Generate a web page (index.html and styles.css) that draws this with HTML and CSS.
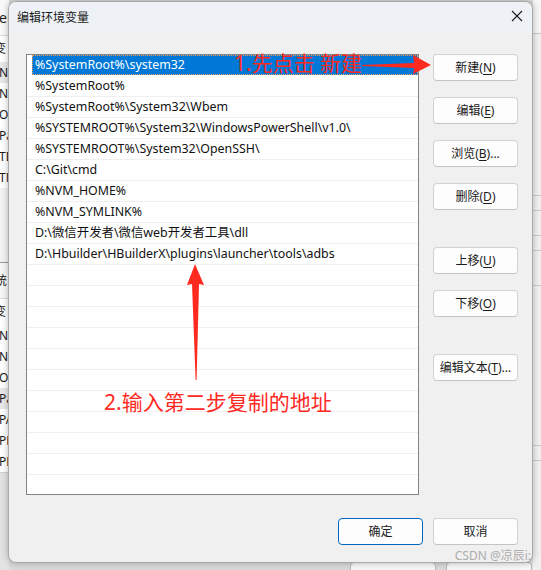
FILE: index.html
```html
<!DOCTYPE html>
<html lang="zh-CN">
<head>
<meta charset="utf-8">
<title>编辑环境变量</title>
<link rel="stylesheet" href="styles.css">
</head>
<body>
<div class="desktop">
  <div class="backwin">
    <div class="bw-left">
      <div class="bw-head"><span>ver</span></div>
      <div class="bw-row bw-tall"><span>变</span></div>
      <div class="bw-row bw-sel"><span>NV</span></div>
      <div class="bw-row"><span>NV</span></div>
      <div class="bw-row"><span>Or</span></div>
      <div class="bw-row"><span>Pa</span></div>
      <div class="bw-row"><span>TE</span></div>
      <div class="bw-row"><span>TM</span></div>
      <div class="bw-gap"></div>
      <div class="bw-head2"><span>统</span></div>
      <div class="bw-row bw-tall"><span>变</span></div>
      <div class="bw-row"><span>NV</span></div>
      <div class="bw-row"><span>NV</span></div>
      <div class="bw-row"><span>OS</span></div>
      <div class="bw-row bw-sel"><span>Pa</span></div>
      <div class="bw-row"><span>PA</span></div>
      <div class="bw-row"><span>PR</span></div>
      <div class="bw-row"><span>PR</span></div>
      <div class="bw-foot"></div>
    </div>
    <div class="bw-mid">
      <div class="bw-mid-fill"></div>
      <div class="bw-btns"><span class="bw-btn"></span><span class="bw-btn"></span></div>
    </div>
    <div class="bw-right">
      <div class="bwr s1"></div>
      <div class="bwr s2"></div>
      <div class="bwr s3"></div>
      <div class="bwr s4"></div>
      <div class="bwr s5"></div>
      <div class="bwr s6"></div>
      <div class="bwr s7"></div>
      <div class="bwr s8"></div>
    </div>
  </div>

  <div class="dialog">
    <div class="titlebar">
      <span class="title">编辑环境变量</span>
      <svg class="close" width="12" height="12" viewBox="0 0 12 12"><path d="M1 1L11 11M11 1L1 11" stroke="#1b1b1b" stroke-width="1.1" fill="none"/></svg>
    </div>
    <div class="body">
      <div class="list">
        <div class="item selected"><span class="label">%SystemRoot%\system32</span></div>
        <div class="item"><span class="label">%SystemRoot%</span></div>
        <div class="item"><span class="label">%SystemRoot%\System32\Wbem</span></div>
        <div class="item"><span class="label">%SYSTEMROOT%\System32\WindowsPowerShell\v1.0\</span></div>
        <div class="item"><span class="label">%SYSTEMROOT%\System32\OpenSSH\</span></div>
        <div class="item"><span class="label">C:\Git\cmd</span></div>
        <div class="item"><span class="label">%NVM_HOME%</span></div>
        <div class="item"><span class="label">%NVM_SYMLINK%</span></div>
        <div class="item"><span class="label">D:\微信开发者\微信web开发者工具\dll</span></div>
        <div class="item"><span class="label">D:\Hbuilder\HBuilderX\plugins\launcher\tools\adbs</span></div>
        <div class="item"></div>
        <div class="item"></div>
        <div class="item"></div>
        <div class="item"></div>
        <div class="item"></div>
        <div class="item"></div>
        <div class="item"></div>
        <div class="item"></div>
        <div class="item"></div>
        <div class="item"></div>
        <div class="item"></div>
      </div>
      <div class="side">
        <button class="btn">新建(<u>N</u>)</button>
        <button class="btn">编辑(<u>E</u>)</button>
        <button class="btn">浏览(<u>B</u>)...</button>
        <button class="btn">删除(<u>D</u>)</button>
        <button class="btn sep">上移(<u>U</u>)</button>
        <button class="btn">下移(<u>O</u>)</button>
        <button class="btn sep">编辑文本(<u>T</u>)...</button>
      </div>
    </div>
    <div class="footer">
      <button class="btn primary">确定</button>
      <button class="btn">取消</button>
    </div>
  </div>

  <svg class="arrows" width="541" height="570" viewBox="0 0 541 570">
    <polygon points="362,65 414,63 413,55 431,65 413,74 414,68 362,66" fill="#ff2a1f"/>
    <polygon points="195,264 204,285 199,284 196.6,380 195.6,380 192,284 187,285" fill="#ff2a1f"/>
  </svg>
  <div class="note note1">1.先点击 新建</div>
  <div class="note note2">2.输入第二步复制的地址</div>
  <div class="watermark">CSDN @凉辰i:</div>
</div>
</body>
</html>
```

FILE: styles.css
```css
* { box-sizing: border-box; }

body {
  margin: 0;
  background: #f0f0f0;
  font-family: "Noto Sans", "Noto Sans CJK SC", sans-serif;
  color: #1a1a1a;
}

.desktop {
  position: relative;
  width: 541px;
  height: 570px;
  overflow: hidden;
  background: #f0f0f0;
}

/* ---------- background window ---------- */
.backwin {
  position: absolute;
  left: 0;
  top: 0;
  width: 541px;
  height: 570px;
  display: flex;
  background: #ececec;
}

.bw-left {
  width: 9px;
  display: flex;
  flex-direction: column;
  overflow: hidden;
  background: #ffffff;
  font-size: 12px;
  white-space: nowrap;
}
.bw-left span { display: block; margin-left: -7px; color: #1a1a1a; }
.bw-head { height: 36px; line-height: 36px; background: #fafafa; border-bottom: 1px solid #dcdcdc; font-size: 14px; }
.bw-head span { margin-left: -8px; }
.bw-row { height: 21px; line-height: 21px; background: #fff; }
.bw-row span { margin-left: -1px; }
.bw-tall { height: 26px; line-height: 26px; }
.bw-tall span { margin-left: -6px; }
.bw-sel { background: #e9e9e9; }
.bw-gap { height: 75px; background: #f3f3f3; border-bottom: 1px solid #9a9a9a; }
.bw-head2 { height: 36px; line-height: 36px; background: #f7f7f7; border-bottom: 1px solid #dcdcdc; }
.bw-head2 span { margin-left: -5px; }
.bw-foot { flex: 1; background: #e3e3e3; border-top: 1px solid #cfcfcf; }

.bw-mid { flex: 1; display: flex; flex-direction: column; background: #dadada; }
.bw-mid-fill { flex: 1; }
.bw-btns { height: 8px; display: flex; justify-content: flex-end; gap: 10px; }
.bw-btn { width: 86px; height: 12px; border: 1px solid #b9b9b9; border-radius: 4px; background: #f8f8f8; }

.bw-right { width: 9px; display: flex; flex-direction: column; background: #f0f0f0; border-left: 1px solid #dedede; }
.bwr { border-bottom: 1px solid #c9c9c9; }
.s1 { height: 34px; background: #f6f6f6; }
.s2 { height: 162px; }
.s3 { height: 15px; }
.s4 { height: 25px; }
.s5 { height: 15px; }
.s6 { height: 35px; }
.s7 { height: 160px; }
.s8 { height: 15px; }

/* ---------- dialog ---------- */
.dialog {
  position: absolute;
  left: 8px;
  top: 1px;
  width: 525px;
  height: 562px;
  border: 1px solid #a9a9a9;
  border-radius: 8px;
  background: #f0f0f0;
  box-shadow: 0 0 7px rgba(0, 0, 0, 0.28);
  display: flex;
  flex-direction: column;
  overflow: hidden;
}

.titlebar {
  height: 31px;
  flex: none;
  background: #eef2f6;
  display: flex;
  align-items: center;
  justify-content: space-between;
  padding: 0 9px 0 8px;
}
.title {
  font-family: "Noto Sans CJK SC", sans-serif;
  font-size: 12px;
  color: #1a1a1a;
  padding-bottom: 2px;
}
.close { display: block; margin-bottom: 3px; }

.body {
  display: flex;
  gap: 14px;
  padding: 21px 14px 0 17px;
}

.list {
  width: 393px;
  height: 441px;
  flex: none;
  background: #ffffff;
  border: 1px solid #838383;
  overflow: hidden;
}

.item {
  height: 21px;
  display: flex;
  padding-left: 5px;
  border-bottom: 1px solid #efefef;
  font-size: 12.4px;
  line-height: 20px;
  white-space: nowrap;
}
.label {
  flex: 1;
  padding-left: 3px;
  padding-top: 0;
  color: #111;
}
.item.selected { border-bottom-color: #fff; }
.item.selected .label {
  background: #0078d7;
  color: #ffffff;
  outline: 1px dotted #f6a15b;
  outline-offset: -1px;
}

.side {
  width: 85px;
  display: flex;
  flex-direction: column;
  gap: 16px;
}

.btn {
  width: 85px;
  height: 27px;
  padding: 0;
  background: #fdfdfd;
  border: 1px solid #d2d2d2;
  border-bottom-color: #c4c4c4;
  border-radius: 4px;
  font-family: "Noto Sans", "Noto Sans CJK SC", sans-serif;
  font-size: 12px;
  color: #1a1a1a;
  line-height: 25px;
  text-align: center;
}
.btn u { text-underline-offset: 2px; }
.side .sep { margin-top: 21px; }

.footer {
  display: flex;
  justify-content: flex-end;
  gap: 10px;
  padding: 23px 14px 0 0;
}
.btn.primary {
  border: 1px solid #0067c0;
}

/* ---------- annotations ---------- */
.arrows {
  position: absolute;
  left: 0;
  top: 0;
  pointer-events: none;
}

.note {
  position: absolute;
  font-family: "Noto Sans", "Noto Sans CJK SC", sans-serif;
  font-size: 21px;
  line-height: 24px;
  color: #ff2a1f;
  white-space: nowrap;
}
.note1 { left: 234px; top: 51px; }
.note2 { left: 104px; top: 390px; }

.watermark {
  position: absolute;
  right: 10px;
  top: 546px;
  font-family: "Noto Sans", "Noto Sans CJK SC", sans-serif;
  font-size: 12px;
  color: #adadad;
  white-space: nowrap;
}
```
